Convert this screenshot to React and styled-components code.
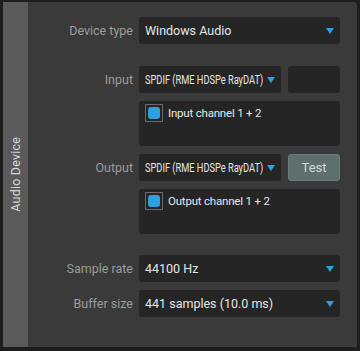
import React from "react";
import styled, { createGlobalStyle } from "styled-components";

const GlobalStyle = createGlobalStyle`
  html, body {
    margin: 0;
    padding: 0;
    background: #1e1e1e;
  }
  body {
    font-family: Roboto, "Liberation Sans", sans-serif;
  }
`;

const Panel = styled.div`
  display: flex;
  margin: 2px 0 0 3px;
  width: 354px;
  height: 345px;
  background: #3a3a3a;
  border-top-right-radius: 4px;
  overflow: hidden;
`;

const Tab = styled.div`
  width: 25px;
  flex: none;
  background: #5a5a5a;
  display: flex;
  align-items: center;
  justify-content: center;
`;

const TabLabel = styled.span`
  writing-mode: vertical-rl;
  transform: rotate(180deg);
  color: #d6d6d6;
  font-size: 12.5px;
  letter-spacing: 0.2px;
`;

const Content = styled.div`
  flex: 1;
  display: flex;
  flex-direction: column;
  padding-top: 15px;
`;

const Row = styled.div`
  display: grid;
  grid-template-columns: 105px 201px;
  column-gap: 6px;
  align-items: center;
  margin-top: ${(p) => p.$gap || 0}px;
`;

const Label = styled.div`
  text-align: right;
  color: #9c9c9c;
  font-size: 12.5px;
`;

const Controls = styled.div`
  display: flex;
  gap: 7px;
`;

const Select = styled.div`
  flex: 1;
  min-width: 0;
  height: 27px;
  box-sizing: border-box;
  display: flex;
  align-items: center;
  justify-content: space-between;
  padding: 0 6px;
  background: #252525;
  border-radius: 3px;
  color: #e6e6e6;
  font-size: 12.5px;
  overflow: hidden;
`;

const Narrow = styled.span`
  display: inline-block;
  font-size: 12.5px;
  transform: scaleX(0.74);
  transform-origin: left center;
  white-space: nowrap;
  width: 110px;
`;

const Arrow = styled.span`
  flex: none;
  width: 0;
  height: 0;
  border-left: 4px solid transparent;
  border-right: 4px solid transparent;
  border-top: 6px solid #2e9fe2;
  margin-top: 1px;
`;

const Side = styled.div`
  width: 52px;
  height: 27px;
  flex: none;
  box-sizing: border-box;
  border-radius: 3px;
  background: ${(p) => (p.$button ? "#5f6f6c" : "#252525")};
  border: ${(p) => (p.$button ? "1px solid #6b7b78" : "none")};
  color: #d8d8d8;
  font-size: 13px;
  display: flex;
  align-items: center;
  justify-content: center;
`;

const Channels = styled.div`
  grid-column: 2;
  height: 45px;
  box-sizing: border-box;
  background: #252525;
  border-radius: 3px;
  padding: 3px 6px;
`;

const Channel = styled.div`
  display: flex;
  align-items: center;
  gap: 5px;
  color: #e6e6e6;
  font-size: 11.5px;
  letter-spacing: -0.2px;
`;

const Check = styled.span`
  width: 18px;
  height: 18px;
  box-sizing: border-box;
  border: 1px solid #6a6a6a;
  display: flex;
  align-items: center;
  justify-content: center;
  &::after {
    content: "";
    width: 12px;
    height: 12px;
    border-radius: 3px;
    background: #2e9fe2;
  }
`;

function Dropdown({ children, narrow }) {
  return (
    <Select>
      {narrow ? <Narrow>{children}</Narrow> : <span>{children}</span>}
      <Arrow />
    </Select>
  );
}

export default function App() {
  return (
    <>
      <GlobalStyle />
      <Panel>
        <Tab>
          <TabLabel>Audio Device</TabLabel>
        </Tab>
        <Content>
          <Row>
            <Label>Device type</Label>
            <Dropdown>Windows Audio</Dropdown>
          </Row>

          <Row $gap={22}>
            <Label>Input</Label>
            <Controls>
              <Dropdown narrow>SPDIF (RME HDSPe RayDAT)</Dropdown>
              <Side />
            </Controls>
          </Row>
          <Row $gap={8}>
            <Channels>
              <Channel>
                <Check />
                Input channel 1 + 2
              </Channel>
            </Channels>
          </Row>

          <Row $gap={8}>
            <Label>Output</Label>
            <Controls>
              <Dropdown narrow>SPDIF (RME HDSPe RayDAT)</Dropdown>
              <Side $button>Test</Side>
            </Controls>
          </Row>
          <Row $gap={8}>
            <Channels>
              <Channel>
                <Check />
                Output channel 1 + 2
              </Channel>
            </Channels>
          </Row>

          <Row $gap={21}>
            <Label>Sample rate</Label>
            <Dropdown>44100 Hz</Dropdown>
          </Row>
          <Row $gap={8}>
            <Label>Buffer size</Label>
            <Dropdown>441 samples (10.0 ms)</Dropdown>
          </Row>
        </Content>
      </Panel>
    </>
  );
}
